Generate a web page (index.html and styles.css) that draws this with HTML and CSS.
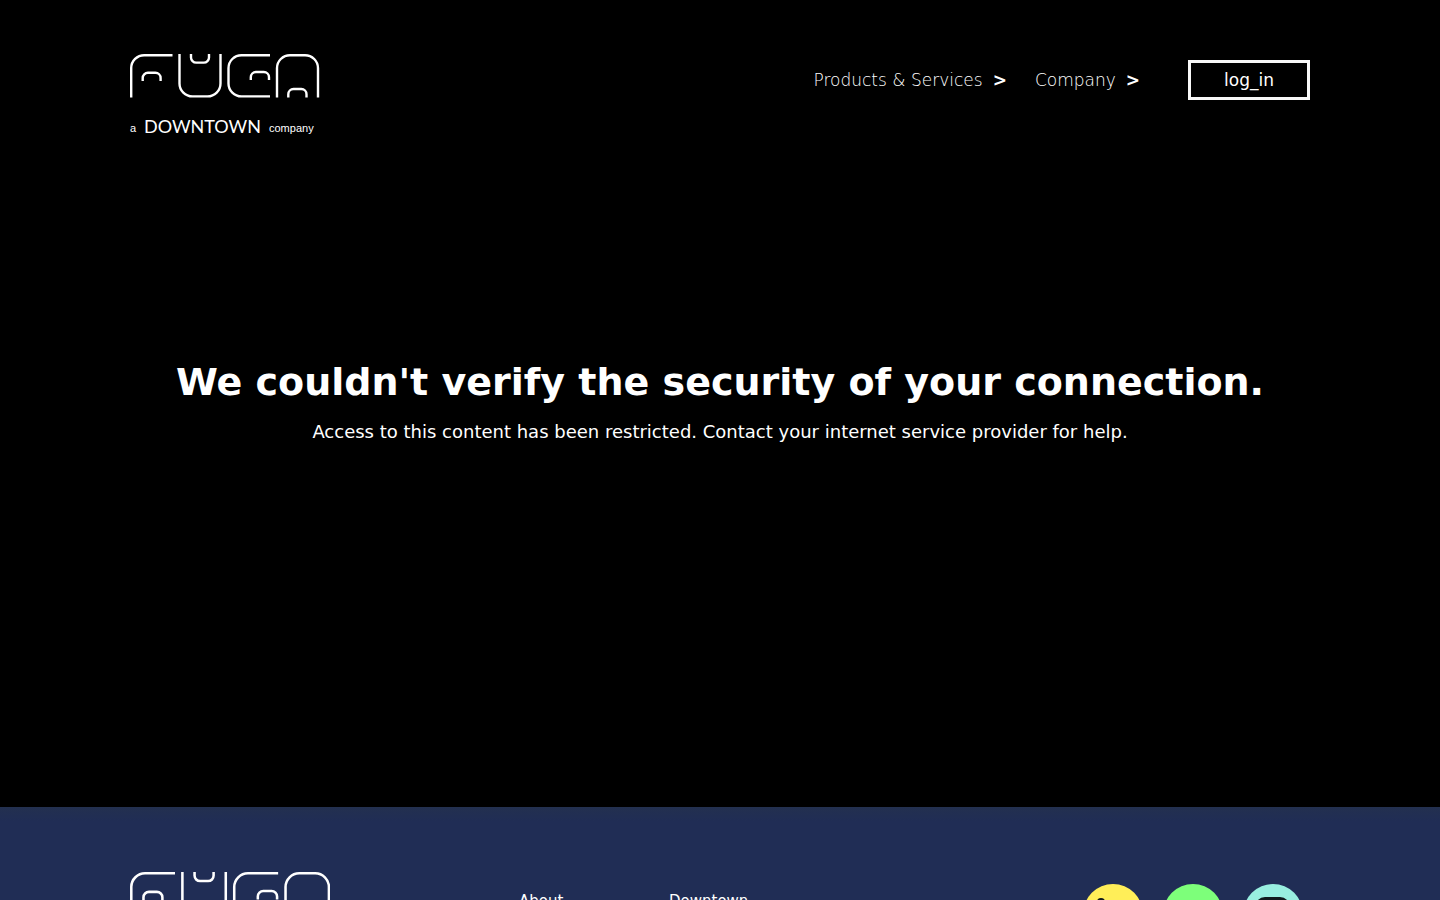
FILE: index.html
```html
<!DOCTYPE html>
<html lang="en">
<head>
<meta charset="utf-8">
<meta name="viewport" content="width=device-width, initial-scale=1">
<title>FUGA</title>
<link rel="stylesheet" href="styles.css">
</head>
<body>
<header class="header container">
  <a class="brand" href="#" aria-label="FUGA home">
    <svg class="brand-logo" viewBox="0 0 189 82" aria-hidden="true">
      <g id="fuga" class="strokes">
        <path d="M1.200 43.500V14A13 13 0 0 1 14.200 1.200H42.500"/>
        <path d="M12.700 27V24A5.200 5.200 0 0 1 17.900 18.800H25.400A5.200 5.200 0 0 1 30.600 24V27"/>
        <path d="M49.500 0V29.400A13 13 0 0 0 62.500 42.400H77.500A13 13 0 0 0 90.500 29.400V0"/>
        <path d="M61 0V3.400A5.200 5.200 0 0 0 66.200 8.600H73.800A5.200 5.200 0 0 0 79 3.400V0"/>
        <path d="M140 1.200H111.500A13 13 0 0 0 98.500 14.200V29.400A13 13 0 0 0 111.500 42.400H140"/>
        <path d="M120.800 26V23.200A5.200 5.200 0 0 1 126 18H133.800A5.200 5.200 0 0 1 139 23.200V26"/>
        <path d="M147 43.500V14.200A13 13 0 0 1 160 1.200H175A13 13 0 0 1 188 14.200V43.500"/>
        <path d="M158.300 43.500V40.200A5.200 5.200 0 0 1 163.500 35H171.300A5.200 5.200 0 0 1 176.500 40.200V43.500"/>
      </g>
      <text class="tag" x="0" y="78">a</text>
      <text class="parent" x="14" y="79">DOWNTOWN</text>
      <text class="tag" x="139" y="78">company</text>
    </svg>
  </a>
  <nav class="nav" aria-label="Main">
    <a class="nav-link" href="#">Products &amp; Services <span class="arrow">&gt;</span></a>
    <a class="nav-link" href="#">Company <span class="arrow">&gt;</span></a>
    <a class="login" href="#">log_in</a>
  </nav>
</header>
<main class="notice">
  <h1 class="notice-title">We couldn't verify the security of your connection.</h1>
  <p class="notice-text">Access to this content has been restricted. Contact your internet service provider for help.</p>
</main>
<footer class="footer">
  <div class="footer-inner container">
    <a class="footer-brand" href="#" aria-label="FUGA">
      <svg class="footer-logo" viewBox="0 0 189 44" aria-hidden="true"><use href="#fuga"/></svg>
    </a>
    <a class="footer-link" href="#">About</a>
    <a class="footer-link" href="#">Downtown</a>
    <div class="social">
      <a class="social-link linkedin" href="#" aria-label="LinkedIn">
        <svg viewBox="0 0 60 60" aria-hidden="true"><circle cx="18" cy="18" r="4"/><path d="M15 24h7v22h-7zM26 24h7v3c5-6 14-4 14 6v13h-7V34c0-6-7-6-7 0v12h-7z"/></svg>
      </a>
      <a class="social-link spotify" href="#" aria-label="Spotify">
        <svg class="waves" viewBox="0 0 60 60" aria-hidden="true"><path d="M16 24q15-5 29 3M18 32q13-4 24 3M20 39q10-3 19 3"/></svg>
      </a>
      <a class="social-link instagram" href="#" aria-label="Instagram">
        <svg class="camera" viewBox="0 0 60 60" aria-hidden="true"><rect x="14" y="15" width="31" height="30" rx="8"/><circle cx="30" cy="30" r="7"/><path d="M38 22h1"/></svg>
      </a>
    </div>
  </div>
</footer>
</body>
</html>
```
FILE: styles.css
```css
* { box-sizing: border-box; }
body {
  margin: 0;
  min-height: 100vh;
  background: #000;
  color: #fff;
  font-family: "DejaVu Sans", sans-serif;
}
a { color: inherit; text-decoration: none; }
.container { width: 100%; max-width: 1220px; margin: 0 auto; padding: 0 20px; }
.header { display: flex; justify-content: space-between; align-items: flex-start; padding-top: 54px; }
.brand { display: block; }
.brand-logo { display: block; width: 189px; overflow: visible; fill: #fff; }
.strokes { fill: none; stroke: #fff; stroke-width: 2.4; }
.tag { font: 11px "Liberation Sans", sans-serif; }
.parent { font: 18px Lato, sans-serif; }
.nav { display: flex; align-items: center; padding-top: 6px; font-size: 17px; line-height: 20px; }
.nav-link { display: flex; gap: 10px; margin-right: 28px; font-weight: 200; }
.arrow { font-weight: 700; }
.login {
  width: 122px;
  margin-left: 20px;
  padding: 7px 0;
  border: 3px solid #f8f8f8;
  text-align: center;
}
.notice { min-height: 671px; padding: 222px 20px 0; text-align: center; }
.notice-title { margin: 0; font-size: 38px; line-height: 48px; font-weight: 700; }
.notice-text { margin: 12px 0 0; font-size: 18px; line-height: 28px; }
.footer { background: linear-gradient(#23304f, #202d55 14px); }
.footer-inner { display: flex; align-items: flex-start; padding-top: 65px; padding-bottom: 40px; }
.footer-brand { width: 389px; }
.footer-logo { display: block; width: 200px; }
.footer-link { width: 150px; padding-top: 18px; font-size: 15px; line-height: 22px; }
.social { display: flex; gap: 20px; margin: 12px 7px 0 auto; }
.social-link { width: 60px; height: 60px; border-radius: 50%; color: #10191d; }
.social-link svg { display: block; fill: currentColor; }
.social-link .waves, .social-link .camera { fill: none; stroke: currentColor; stroke-width: 4; stroke-linecap: round; }
.linkedin { background: #ffee58; }
.spotify { background: #7dff7a; }
.instagram { background: #98efe0; }
```
